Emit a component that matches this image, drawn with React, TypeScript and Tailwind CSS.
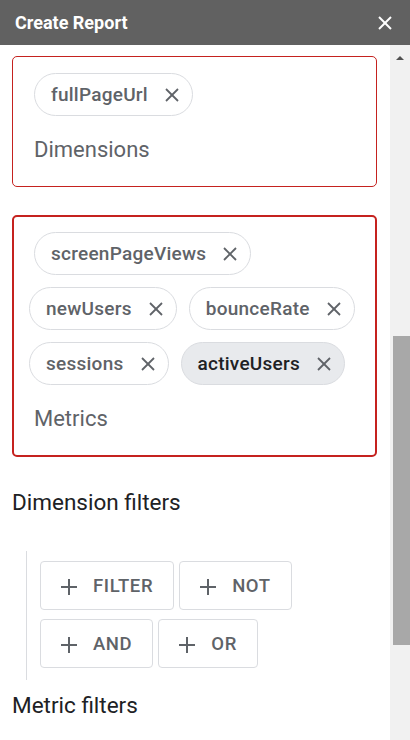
import React from "react";

const font = { fontFamily: "Roboto, 'Noto Sans', sans-serif" };

function XIcon({ className, w = 2 }: { className?: string; w?: number }) {
  return (
    <svg viewBox="0 0 14 14" className={className} fill="none" stroke="currentColor" strokeWidth={w} strokeLinecap="butt">
      <line x1="1" y1="1" x2="13" y2="13" />
      <line x1="13" y1="1" x2="1" y2="13" />
    </svg>
  );
}

function PlusIcon() {
  return (
    <svg viewBox="0 0 16 16" className="w-[16px] h-[16px]" fill="none" stroke="currentColor" strokeWidth="2">
      <line x1="8" y1="0" x2="8" y2="16" />
      <line x1="0" y1="8" x2="16" y2="8" />
    </svg>
  );
}

function Chip({ label, active }: { label: string; active?: boolean }) {
  return (
    <div
      className={`flex items-center h-[43px] rounded-full border border-[#dadce0] pl-[16px] pr-[13px] gap-[17px] ${
        active ? "bg-[#e8eaed] text-[#202124]" : "bg-white text-[#5f6368]"
      }`}
    >
      <span className="text-[19px] font-medium tracking-[0.25px] pt-[2px]">{label}</span>
      <XIcon className="w-[14px] h-[14px] text-[#5f6368]" w={1.8} />
    </div>
  );
}

function FilterButton({ label }: { label: string }) {
  return (
    <div className="flex items-center h-[49px] rounded-[4px] border border-[#dadce0] pl-[20px] pr-[20px] gap-[16px] text-[#5f6368]">
      <div className="pt-[2px]">
        <PlusIcon />
      </div>
      <span className="text-[18.5px] font-medium uppercase tracking-[0.6px] pt-[3px]">{label}</span>
    </div>
  );
}

export default function App() {
  return (
    <div className="w-[410px] h-[740px] overflow-hidden bg-white flex flex-col" style={font}>
      <div className="h-[45px] shrink-0 bg-[#616161] flex items-center justify-between pl-[15px] pr-[18px]">
        <span className="text-white text-[18px] font-bold">Create Report</span>
        <XIcon className="w-[14px] h-[14px] text-white" />
      </div>
      <div className="flex flex-1 min-h-0">
        <div className="w-[390px] pl-[12px] pr-[13px] pt-[11px] flex flex-col">
          <div className="h-[131px] border border-[#c5221f] rounded-[5px] pl-[21px] pt-[16px] flex flex-col">
            <div className="flex">
              <Chip label="fullPageUrl" />
            </div>
            <div className="mt-[19px] text-[22px] leading-[30px] text-[#5f6368]">Dimensions</div>
          </div>
          <div className="mt-[28px] h-[242px] border-2 border-[#c5221f] rounded-[5px] pl-[15px] pt-[15px] flex flex-col">
            <div className="flex flex-col gap-[12px]">
              <div className="flex pl-[5px]">
                <Chip label="screenPageViews" />
              </div>
              <div className="flex gap-[12px]">
                <Chip label="newUsers" />
                <Chip label="bounceRate" />
              </div>
              <div className="flex gap-[12px]">
                <Chip label="sessions" />
                <Chip label="activeUsers" active />
              </div>
            </div>
            <div className="mt-[19px] pl-[5px] text-[22px] leading-[30px] text-[#5f6368]">Metrics</div>
          </div>
          <div className="mt-[30px] text-[22.5px] leading-[30px] text-[#202124]">Dimension filters</div>
          <div className="mt-[34px] ml-[14px] border-l border-[#dadce0] pl-[13px] pt-[10px] pb-[12px] flex flex-col gap-[9px]">
            <div className="flex gap-[5px]">
              <FilterButton label="Filter" />
              <FilterButton label="Not" />
            </div>
            <div className="flex gap-[5px]">
              <FilterButton label="And" />
              <FilterButton label="Or" />
            </div>
          </div>
          <div className="mt-[10px] text-[22.5px] leading-[30px] text-[#202124]">Metric filters</div>
        </div>
        <div className="w-[20px] bg-[#f1f1f1] flex flex-col items-center">
          <div className="mt-[11px] w-0 h-0 border-l-[4px] border-r-[4px] border-b-[4px] border-l-transparent border-r-transparent border-b-[#505050]" />
          <div className="mt-[276px] ml-[2px] w-[17px] h-[309px] bg-[#a8a8a8]" />
        </div>
      </div>
    </div>
  );
}
